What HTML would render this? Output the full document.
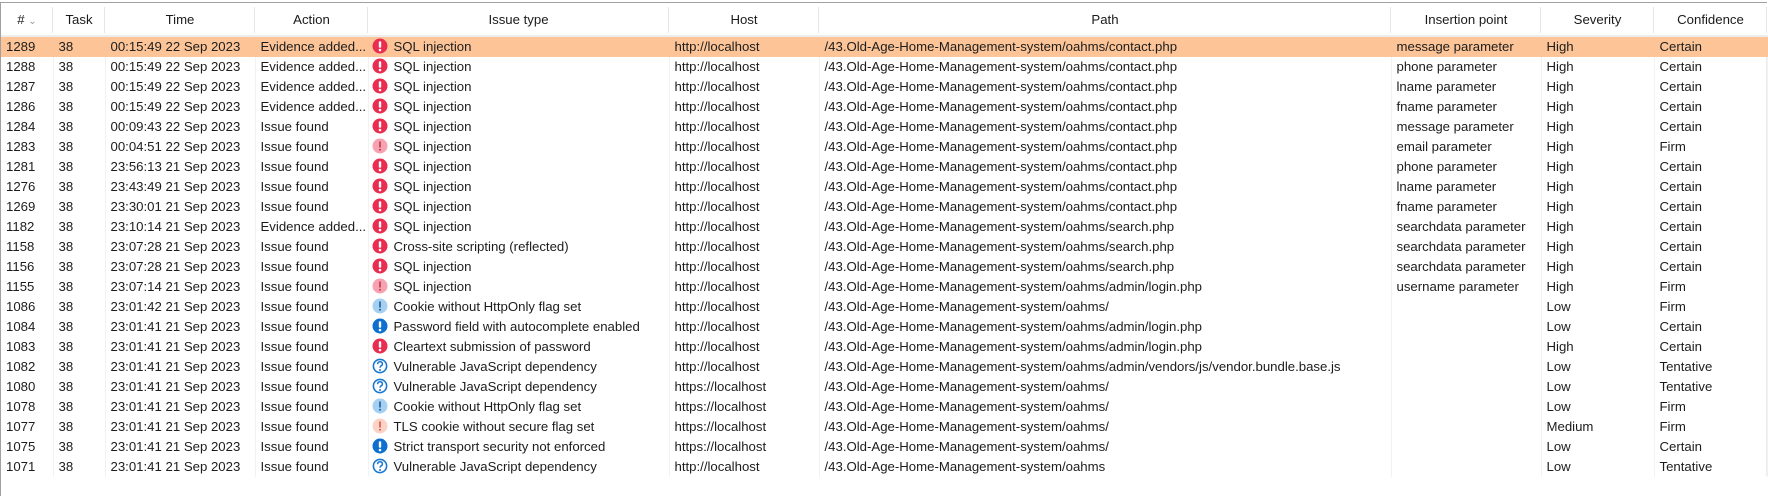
<!DOCTYPE html>
<html><head><meta charset="utf-8"><style>
html,body{margin:0;padding:0;background:#fff;width:1768px;height:496px;overflow:hidden}
body{font-family:"Liberation Sans",sans-serif;font-size:13.2px;color:#1c1c1c;position:relative}
.frame{position:absolute;left:0;top:2px;width:1767px;height:494px;border-top:1px solid #a0a0a0;border-left:1px solid #a0a0a0;box-sizing:border-box}
.rb{position:absolute;left:1766px;top:3px;width:1px;height:473px;background:#ececec}
table{position:absolute;left:1px;top:3px;border-collapse:collapse;table-layout:fixed;width:1766px}
th{height:32px;font-weight:normal;text-align:center;padding:0;background:#fff;border-bottom:2px solid #ededed;position:relative;color:#1a1a1a}
th:after{content:"";position:absolute;right:0;top:4px;height:26px;width:1px;background:#e6e6e6}
td{height:20px;padding:0 0 0 5px;white-space:nowrap;overflow:hidden;text-overflow:ellipsis;border-right:1px solid #f2f2f2;line-height:20px}
tr.sel td{background:#fdc597;border-right-color:#fdc597}
td.it{padding-left:3px}
td.it svg{vertical-align:-3px;margin-right:6px}
</style></head><body>
<div class="frame"></div><div class="rb"></div>
<svg width="0" height="0" style="position:absolute">
<defs>
<g id="r"><circle cx="8" cy="8" r="7.5" fill="#ea2c4e"/><rect x="6.8" y="3.2" width="2.4" height="6.5" rx="1" fill="#fff"/><circle cx="8" cy="12" r="1.3" fill="#fff"/></g>
<g id="rp"><circle cx="8" cy="8" r="7.5" fill="#f6a2b1"/><rect x="7.3" y="3.5" width="1.4" height="6" fill="#b8283e"/><circle cx="8" cy="11.8" r="0.9" fill="#b8283e"/></g>
<g id="b"><circle cx="8" cy="8" r="7.5" fill="#0e6fcf"/><rect x="6.8" y="3.2" width="2.4" height="6.5" rx="1" fill="#fff"/><circle cx="8" cy="12" r="1.3" fill="#fff"/></g>
<g id="bl"><circle cx="8" cy="8" r="7.5" fill="#a6d0f2"/><rect x="7.2" y="3.5" width="1.6" height="6" fill="#1c5e98"/><circle cx="8" cy="11.8" r="1" fill="#1c5e98"/></g>
<g id="q"><circle cx="8" cy="8" r="6.6" fill="#fff" stroke="#1a78d0" stroke-width="1.6"/><path d="M5.6 6.2 Q5.8 3.8 8 3.8 Q10.4 3.8 10.4 6 Q10.4 7.3 8.8 8.1 Q8 8.6 8 9.8" fill="none" stroke="#1a78d0" stroke-width="1.5"/><circle cx="8" cy="12" r="1" fill="#1a78d0"/></g>
<g id="o"><circle cx="8" cy="8" r="7.5" fill="#fbd3c6"/><rect x="7.3" y="3.5" width="1.4" height="6" fill="#d9402c"/><circle cx="8" cy="11.8" r="0.9" fill="#d9402c"/></g>
</defs></svg>
<table>
<colgroup><col style="width:52px"><col style="width:52px"><col style="width:150px"><col style="width:113px"><col style="width:301px"><col style="width:150px"><col style="width:572px"><col style="width:150px"><col style="width:113px"><col style="width:113px"></colgroup>
<tr><th># <span style="color:#999;font-size:10px">&#8964;</span></th><th>Task</th><th>Time</th><th>Action</th><th>Issue type</th><th>Host</th><th>Path</th><th>Insertion point</th><th>Severity</th><th>Confidence</th></tr>
<tr class="sel"><td>1289</td><td>38</td><td>00:15:49 22 Sep 2023</td><td>Evidence added...</td><td class="it"><svg width="16" height="16"><use href="#r"/></svg>SQL injection</td><td>http://localhost</td><td>/43.Old-Age-Home-Management-system/oahms/contact.php</td><td>message parameter</td><td>High</td><td>Certain</td></tr>
<tr><td>1288</td><td>38</td><td>00:15:49 22 Sep 2023</td><td>Evidence added...</td><td class="it"><svg width="16" height="16"><use href="#r"/></svg>SQL injection</td><td>http://localhost</td><td>/43.Old-Age-Home-Management-system/oahms/contact.php</td><td>phone parameter</td><td>High</td><td>Certain</td></tr>
<tr><td>1287</td><td>38</td><td>00:15:49 22 Sep 2023</td><td>Evidence added...</td><td class="it"><svg width="16" height="16"><use href="#r"/></svg>SQL injection</td><td>http://localhost</td><td>/43.Old-Age-Home-Management-system/oahms/contact.php</td><td>lname parameter</td><td>High</td><td>Certain</td></tr>
<tr><td>1286</td><td>38</td><td>00:15:49 22 Sep 2023</td><td>Evidence added...</td><td class="it"><svg width="16" height="16"><use href="#r"/></svg>SQL injection</td><td>http://localhost</td><td>/43.Old-Age-Home-Management-system/oahms/contact.php</td><td>fname parameter</td><td>High</td><td>Certain</td></tr>
<tr><td>1284</td><td>38</td><td>00:09:43 22 Sep 2023</td><td>Issue found</td><td class="it"><svg width="16" height="16"><use href="#r"/></svg>SQL injection</td><td>http://localhost</td><td>/43.Old-Age-Home-Management-system/oahms/contact.php</td><td>message parameter</td><td>High</td><td>Certain</td></tr>
<tr><td>1283</td><td>38</td><td>00:04:51 22 Sep 2023</td><td>Issue found</td><td class="it"><svg width="16" height="16"><use href="#rp"/></svg>SQL injection</td><td>http://localhost</td><td>/43.Old-Age-Home-Management-system/oahms/contact.php</td><td>email parameter</td><td>High</td><td>Firm</td></tr>
<tr><td>1281</td><td>38</td><td>23:56:13 21 Sep 2023</td><td>Issue found</td><td class="it"><svg width="16" height="16"><use href="#r"/></svg>SQL injection</td><td>http://localhost</td><td>/43.Old-Age-Home-Management-system/oahms/contact.php</td><td>phone parameter</td><td>High</td><td>Certain</td></tr>
<tr><td>1276</td><td>38</td><td>23:43:49 21 Sep 2023</td><td>Issue found</td><td class="it"><svg width="16" height="16"><use href="#r"/></svg>SQL injection</td><td>http://localhost</td><td>/43.Old-Age-Home-Management-system/oahms/contact.php</td><td>lname parameter</td><td>High</td><td>Certain</td></tr>
<tr><td>1269</td><td>38</td><td>23:30:01 21 Sep 2023</td><td>Issue found</td><td class="it"><svg width="16" height="16"><use href="#r"/></svg>SQL injection</td><td>http://localhost</td><td>/43.Old-Age-Home-Management-system/oahms/contact.php</td><td>fname parameter</td><td>High</td><td>Certain</td></tr>
<tr><td>1182</td><td>38</td><td>23:10:14 21 Sep 2023</td><td>Evidence added...</td><td class="it"><svg width="16" height="16"><use href="#r"/></svg>SQL injection</td><td>http://localhost</td><td>/43.Old-Age-Home-Management-system/oahms/search.php</td><td>searchdata parameter</td><td>High</td><td>Certain</td></tr>
<tr><td>1158</td><td>38</td><td>23:07:28 21 Sep 2023</td><td>Issue found</td><td class="it"><svg width="16" height="16"><use href="#r"/></svg>Cross-site scripting (reflected)</td><td>http://localhost</td><td>/43.Old-Age-Home-Management-system/oahms/search.php</td><td>searchdata parameter</td><td>High</td><td>Certain</td></tr>
<tr><td>1156</td><td>38</td><td>23:07:28 21 Sep 2023</td><td>Issue found</td><td class="it"><svg width="16" height="16"><use href="#r"/></svg>SQL injection</td><td>http://localhost</td><td>/43.Old-Age-Home-Management-system/oahms/search.php</td><td>searchdata parameter</td><td>High</td><td>Certain</td></tr>
<tr><td>1155</td><td>38</td><td>23:07:14 21 Sep 2023</td><td>Issue found</td><td class="it"><svg width="16" height="16"><use href="#rp"/></svg>SQL injection</td><td>http://localhost</td><td>/43.Old-Age-Home-Management-system/oahms/admin/login.php</td><td>username parameter</td><td>High</td><td>Firm</td></tr>
<tr><td>1086</td><td>38</td><td>23:01:42 21 Sep 2023</td><td>Issue found</td><td class="it"><svg width="16" height="16"><use href="#bl"/></svg>Cookie without HttpOnly flag set</td><td>http://localhost</td><td>/43.Old-Age-Home-Management-system/oahms/</td><td></td><td>Low</td><td>Firm</td></tr>
<tr><td>1084</td><td>38</td><td>23:01:41 21 Sep 2023</td><td>Issue found</td><td class="it"><svg width="16" height="16"><use href="#b"/></svg>Password field with autocomplete enabled</td><td>http://localhost</td><td>/43.Old-Age-Home-Management-system/oahms/admin/login.php</td><td></td><td>Low</td><td>Certain</td></tr>
<tr><td>1083</td><td>38</td><td>23:01:41 21 Sep 2023</td><td>Issue found</td><td class="it"><svg width="16" height="16"><use href="#r"/></svg>Cleartext submission of password</td><td>http://localhost</td><td>/43.Old-Age-Home-Management-system/oahms/admin/login.php</td><td></td><td>High</td><td>Certain</td></tr>
<tr><td>1082</td><td>38</td><td>23:01:41 21 Sep 2023</td><td>Issue found</td><td class="it"><svg width="16" height="16"><use href="#q"/></svg>Vulnerable JavaScript dependency</td><td>http://localhost</td><td>/43.Old-Age-Home-Management-system/oahms/admin/vendors/js/vendor.bundle.base.js</td><td></td><td>Low</td><td>Tentative</td></tr>
<tr><td>1080</td><td>38</td><td>23:01:41 21 Sep 2023</td><td>Issue found</td><td class="it"><svg width="16" height="16"><use href="#q"/></svg>Vulnerable JavaScript dependency</td><td>https://localhost</td><td>/43.Old-Age-Home-Management-system/oahms/</td><td></td><td>Low</td><td>Tentative</td></tr>
<tr><td>1078</td><td>38</td><td>23:01:41 21 Sep 2023</td><td>Issue found</td><td class="it"><svg width="16" height="16"><use href="#bl"/></svg>Cookie without HttpOnly flag set</td><td>https://localhost</td><td>/43.Old-Age-Home-Management-system/oahms/</td><td></td><td>Low</td><td>Firm</td></tr>
<tr><td>1077</td><td>38</td><td>23:01:41 21 Sep 2023</td><td>Issue found</td><td class="it"><svg width="16" height="16"><use href="#o"/></svg>TLS cookie without secure flag set</td><td>https://localhost</td><td>/43.Old-Age-Home-Management-system/oahms/</td><td></td><td>Medium</td><td>Firm</td></tr>
<tr><td>1075</td><td>38</td><td>23:01:41 21 Sep 2023</td><td>Issue found</td><td class="it"><svg width="16" height="16"><use href="#b"/></svg>Strict transport security not enforced</td><td>https://localhost</td><td>/43.Old-Age-Home-Management-system/oahms/</td><td></td><td>Low</td><td>Certain</td></tr>
<tr><td>1071</td><td>38</td><td>23:01:41 21 Sep 2023</td><td>Issue found</td><td class="it"><svg width="16" height="16"><use href="#q"/></svg>Vulnerable JavaScript dependency</td><td>http://localhost</td><td>/43.Old-Age-Home-Management-system/oahms</td><td></td><td>Low</td><td>Tentative</td></tr>
</table>
</body></html>
